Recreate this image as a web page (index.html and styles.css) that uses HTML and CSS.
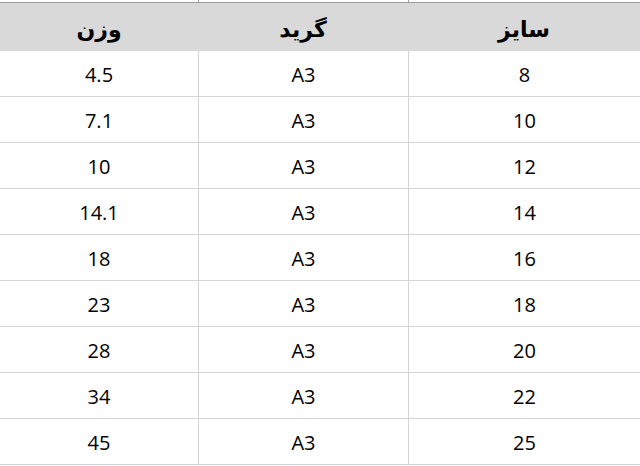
FILE: index.html
```html
<!DOCTYPE html>
<html lang="fa">
<head>
<meta charset="utf-8">
<link rel="stylesheet" href="styles.css">
</head>
<body>
<div class="sheet" dir="rtl">
  <div class="topstrip">
    <span class="c c1"></span><span class="c c2"></span><span class="c c3"></span>
  </div>
  <div class="row head">
    <div class="cell c1">سایز</div>
    <div class="cell c2">گرید</div>
    <div class="cell c3">وزن</div>
  </div>
  <div class="row"><div class="cell c1">8</div><div class="cell c2">A3</div><div class="cell c3">4.5</div></div>
  <div class="row"><div class="cell c1">10</div><div class="cell c2">A3</div><div class="cell c3">7.1</div></div>
  <div class="row"><div class="cell c1">12</div><div class="cell c2">A3</div><div class="cell c3">10</div></div>
  <div class="row"><div class="cell c1">14</div><div class="cell c2">A3</div><div class="cell c3">14.1</div></div>
  <div class="row"><div class="cell c1">16</div><div class="cell c2">A3</div><div class="cell c3">18</div></div>
  <div class="row"><div class="cell c1">18</div><div class="cell c2">A3</div><div class="cell c3">23</div></div>
  <div class="row"><div class="cell c1">20</div><div class="cell c2">A3</div><div class="cell c3">28</div></div>
  <div class="row"><div class="cell c1">22</div><div class="cell c2">A3</div><div class="cell c3">34</div></div>
  <div class="row"><div class="cell c1">25</div><div class="cell c2">A3</div><div class="cell c3">45</div></div>
</div>
</body>
</html>
```
FILE: styles.css
```css
html, body {
  margin: 0;
  padding: 0;
  background: #ffffff;
}
body {
  width: 640px;
  height: 466px;
  overflow: hidden;
  font-family: "Open Sans", "DejaVu Sans", sans-serif;
  color: #000;
}
.sheet {
  width: 640px;
}
.topstrip, .row {
  display: grid;
  grid-template-columns: 232px 210px 198px;
}
.topstrip {
  height: 2px;
  border-bottom: 1px solid #9b9b9b;
}
.topstrip .c {
  border-left: 1px solid #9b9b9b;
}
.topstrip .c3 {
  border-left: none;
}
.row {
  height: 45px;
  border-bottom: 1px solid #d4d4d4;
}
.cell {
  display: flex;
  align-items: center;
  justify-content: center;
  font-size: 20px;
  border-left: 1px solid #d4d4d4;
  padding-top: 1px;
  box-sizing: border-box;
}
.cell.c3 {
  border-left: none;
}
.row.head {
  height: 48px;
  border-bottom: none;
  background: #d9d9d9;
}
.head .cell {
  border-left: none;
  font-family: "DejaVu Sans", sans-serif;
  font-weight: bold;
  font-size: 22px;
  padding-top: 5px;
  padding-bottom: 0;
}
```
